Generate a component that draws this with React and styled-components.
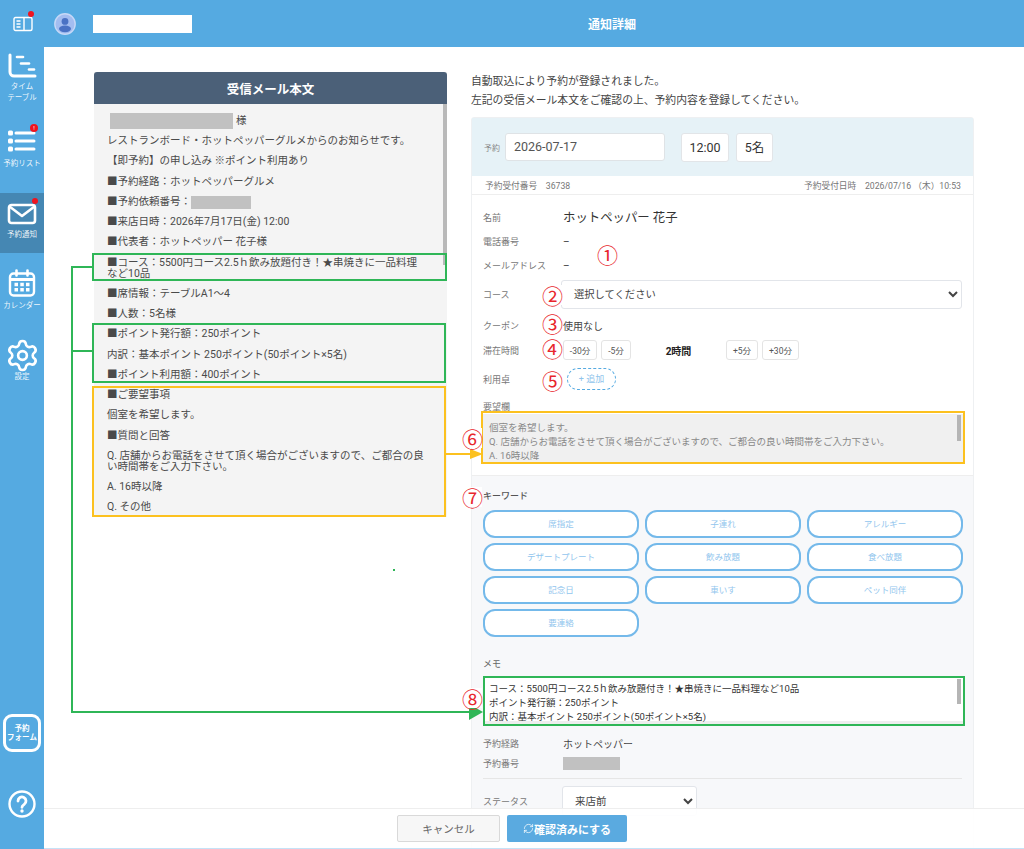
import React from "react";
import styled, { createGlobalStyle } from "styled-components";
import { Settings, RefreshCw } from "lucide-react";

const GlobalStyle = createGlobalStyle`
  html, body { margin: 0; padding: 0; background: #fff; }
  body { font-family: Roboto, "Noto Sans CJK JP", sans-serif; }
  * { box-sizing: border-box; }
`;

const mailLines = [
  "レストランボード・ホットペッパーグルメからのお知らせです。",
  "【即予約】の申し込み ※ポイント利用あり",
  "■予約経路：ホットペッパーグルメ",
];
const mailLines2 = [
  "■来店日時：2026年7月17日(金) 12:00",
  "■代表者：ホットペッパー 花子様",
  "■コース：5500円コース2.5ｈ飲み放題付き！★串焼きに一品料理\nなど10品",
  "■席情報：テーブルA1〜4",
  "■人数：5名様",
  "■ポイント発行額：250ポイント",
  "内訳：基本ポイント 250ポイント(50ポイント×5名)",
  "■ポイント利用額：400ポイント",
  "■ご要望事項",
  "個室を希望します。",
  "■質問と回答",
  "Q. 店舗からお電話をさせて頂く場合がございますので、ご都合の良\nい時間帯をご入力下さい。",
  "A. 16時以降",
  "Q. その他",
];
const keywords = ["席指定", "子連れ", "アレルギー", "デザートプレート", "飲み放題", "食べ放題", "記念日", "車いす", "ペット同伴", "要連絡"];
const markers = [
  ["①", 607, 254],
  ["②", 552, 295],
  ["③", 552, 323],
  ["④", 552, 348],
  ["⑤", 552, 380],
  ["⑥", 472, 438],
  ["⑦", 472, 497],
  ["⑧", 472, 698],
];

const App = () => {
  return (
    <Page>
      <GlobalStyle />
      <TopBar>
        <BookIcon>
          <svg width="20" height="16" viewBox="0 0 20 16" fill="none" stroke="#fff" strokeWidth="1.4">
            <rect x="1" y="1.5" width="18" height="13" rx="1.5" />
            <path d="M11 1.5v13M3.5 5h4M3.5 8h4M3.5 11h4" />
          </svg>
          <RedDot $x={15} $y={-5} />
        </BookIcon>
        <Avatar>
          <svg width="22" height="22" viewBox="0 0 22 22">
            <circle cx="11" cy="11" r="10.2" fill="#a3bdf0" stroke="#c6d8f7" strokeWidth="1.4" />
            <circle cx="11" cy="8.4" r="3.4" fill="#4a72c4" />
            <ellipse cx="11" cy="15.8" rx="6" ry="3.4" fill="#4a72c4" />
          </svg>
        </Avatar>
        <NameBlank />
        <Title>通知詳細</Title>
      </TopBar>

      <Body>
        <Side>
          <SideItem $h={73} $pad={6}>
            <svg width="30" height="25" viewBox="0 0 30 25" fill="none" stroke="#fff" strokeLinecap="round">
              <path d="M3 2v17a4 4 0 0 0 4 4h21" strokeWidth="3" />
              <path d="M10 4h6" strokeWidth="2.6" />
              <path d="M14 10.500h8" strokeWidth="2.6" />
              <path d="M22 16.500h5" strokeWidth="2.6" />
            </svg>
            <SideLabel $mt={2.500}>タイム<br />テーブル</SideLabel>
          </SideItem>
          <SideItem $h={73} $pad={9}>
            <svg width="30" height="24" viewBox="0 0 30 24" fill="none" stroke="#fff">
              <path d="M9 4h18M9 12h18M9 20h18" strokeWidth="3" strokeLinecap="round" />
              <rect x="1" y="1.500" width="5" height="5" rx="1.500" fill="#fff" stroke="none" />
              <rect x="1" y="9.500" width="5" height="5" rx="1.500" fill="#fff" stroke="none" />
              <rect x="1" y="17.500" width="5" height="5" rx="1.500" fill="#fff" stroke="none" />
            </svg>
            <SideLabel $mt={5}>予約リスト</SideLabel>
            <AlertBadge>!</AlertBadge>
          </SideItem>
          <SideItem $h={60} $pad={10} $active>
            <svg width="30" height="22" viewBox="0 0 30 22" fill="none" stroke="#fff" strokeWidth="2.6" strokeLinejoin="round">
              <rect x="2" y="2" width="26" height="18" rx="2.500" />
              <path d="M2.500 3.500 15 13 27.500 3.500" />
            </svg>
            <SideLabel>予約通知</SideLabel>
            <RedDot $x={32} $y={5} />
          </SideItem>
          <SideItem $h={73} $pad={16}>
            <svg width="28" height="28" viewBox="0 0 28 28" fill="none" stroke="#fff">
              <rect x="2" y="4.500" width="24" height="22" rx="3.500" strokeWidth="2.400" />
              <path d="M2 10.500h24" strokeWidth="3" />
              <path d="M8.500 1.500v5M19.500 1.500v5" strokeWidth="2.600" strokeLinecap="round" />
              <path d="M6.500 15.500h3.500M12.300 15.500h3.500M18 15.500h3.500M6.500 20.700h3.500M12.300 20.700h3.500M18 20.700h3.500" strokeWidth="3.400" />
            </svg>
            <SideLabel $mt={3}>カレンダー</SideLabel>
          </SideItem>
          <SideItem $h={60} $pad={12}>
            <Settings size={35} color="#fff" strokeWidth={1.8} />
            <SideLabel $mt={-2.500}>設定</SideLabel>
          </SideItem>
          <FormButton>予約<br />フォーム</FormButton>
          <HelpIcon>
            <svg width="28" height="28" viewBox="0 0 28 28" fill="none" stroke="#fff">
              <circle cx="14" cy="14" r="12.500" strokeWidth="2.400" />
              <path d="M10 11a4 4 0 1 1 6.200 3.300c-1.400.9-2.200 1.500-2.200 3" strokeWidth="2.800" strokeLinecap="round" />
              <circle cx="14" cy="21" r="1.700" fill="#fff" stroke="none" />
            </svg>
          </HelpIcon>
        </Side>

        <Main>
          <MailPanel>
            <MailHead>受信メール本文</MailHead>
            <MailBody>
              <MailLine><Redact $w={123} $h={16} $gap={3} />様</MailLine>
              {mailLines.map((t) => <MailLine key={t}>{t}</MailLine>)}
              <MailLine>■予約依頼番号：<Redact $w={60} $h={13} /></MailLine>
              {mailLines2.map((t) => <MailLine key={t}>{t}</MailLine>)}
              <MailThumb />
            </MailBody>
          </MailPanel>

          <Detail>
            <Intro>
              自動取込により予約が登録されました。<br />
              左記の受信メール本文をご確認の上、予約内容を登録してください。
            </Intro>
            <Card>
              <BookingHead>
                <TinyLabel>予約</TinyLabel>
                <DateBox>2026-07-17</DateBox>
                <ValueBox $w={48} $ml={16}>12:00</ValueBox>
                <ValueBox $w={37} $ml={7}>5名</ValueBox>
              </BookingHead>
              <MetaRow>
                <span>予約受付番号　36738</span>
                <span>予約受付日時　2026/07/16 （木）10:53</span>
              </MetaRow>
              <FormSection>
                <Row $h={24}><Label>名前</Label><GuestName>ホットペッパー 花子</GuestName></Row>
                <Row $h={24}><Label>電話番号</Label><Value>–</Value></Row>
                <Row $h={24}><Label>メールアドレス</Label><Value>–</Value></Row>
                <Row $h={29} $mt={3}>
                  <Label $w={78}>コース</Label>
                  <CourseSelect defaultValue="none">
                    <option value="none">選択してください</option>
                  </CourseSelect>
                </Row>
                <Row $h={30} $mt={1}><Label>クーポン</Label><Value>使用なし</Value></Row>
                <Row $h={20}>
                  <Label>滞在時間</Label>
                  <StepButton $w={34}>-30分</StepButton>
                  <StepButton $w={30} $ml={4}>-5分</StepButton>
                  <StayTime>2時間</StayTime>
                  <StepButton $w={32}>+5分</StepButton>
                  <StepButton $w={37} $ml={4}>+30分</StepButton>
                </Row>
                <Row $h={22} $mt={8}><Label $w={84}>利用卓</Label><AddTable>+ 追加</AddTable></Row>
                <RequestLabel>要望欄</RequestLabel>
                <NoteBox $gray $h={48}>
                  個室を希望します。<br />
                  Q. 店舗からお電話をさせて頂く場合がございますので、ご都合の良い時間帯をご入力下さい。<br />
                  A. 16時以降
                  <NoteThumb $h={26} />
                </NoteBox>
              </FormSection>
              <KeywordSection>
                <KeywordLabel>キーワード</KeywordLabel>
                <KeywordGrid>
                  {keywords.map((k) => <Keyword key={k}>{k}</Keyword>)}
                </KeywordGrid>
                <MemoLabel>メモ</MemoLabel>
                <NoteBox $h={46}>
                  コース：5500円コース2.5ｈ飲み放題付き！★串焼きに一品料理など10品<br />
                  ポイント発行額：250ポイント<br />
                  内訳：基本ポイント 250ポイント(50ポイント×5名)
                  <NoteThumb $h={25} />
                </NoteBox>
                <Row $h={20} $mt={9}><Label>予約経路</Label><Value>ホットペッパー</Value></Row>
                <Row $h={20}><Label>予約番号</Label><Redact $w={57} $h={13} /></Row>
                <Divider />
                <Row $h={30} $mt={7}>
                  <Label $w={79}>ステータス</Label>
                  <StatusSelect defaultValue="before">
                    <option value="before">来店前</option>
                  </StatusSelect>
                </Row>
              </KeywordSection>
            </Card>
          </Detail>
        </Main>
      </Body>

      <Footer>
        <CancelButton>キャンセル</CancelButton>
        <ConfirmButton><RefreshCw size={11} strokeWidth={1.6} />確認済みにする</ConfirmButton>
      </Footer>

      {/* 説明用の注釈 */}
      <Callout $x={92} $y={253} $w={355} $h={28} />
      <Callout $x={92} $y={323} $w={354} $h={60} />
      <Callout $x={92} $y={386} $w={354} $h={131} $yellow />
      <Callout $x={481} $y={411} $w={484} $h={53} $yellow />
      <Callout $x={483} $y={676} $w={482} $h={50} />
      <Arrows width="1024" height="849" viewBox="0 0 1024 849" fill="none">
        <path d="M92 267H72V712H470M72 351H92" stroke="#2fb657" strokeWidth="2" />
        <path d="M469 704 483 712 469 720Z" fill="#2fb657" />
        <path d="M446 454H471" stroke="#fcc11f" strokeWidth="2" />
        <path d="M470 449 483 454 470 459Z" fill="#fcc11f" />
        <rect x="393" y="569" width="2" height="2" fill="#2fb657" />
      </Arrows>
      {markers.map(([n, x, y]) => <Marker key={n} $x={x} $y={y}>{n}</Marker>)}
    </Page>
  );
};

export default App;

const Page = styled.div`
  position: relative;
  width: 1024px;
  height: 849px;
  overflow: hidden;
  color: #444;
  font-family: Roboto, "Noto Sans CJK JP", sans-serif;
`;
const TopBar = styled.header`
  display: flex;
  align-items: center;
  height: 47px;
  background: #55aae1;
  position: relative;
`;
const BookIcon = styled.div`
  position: relative;
  display: flex;
  width: 20px;
  margin-left: 13px;
`;
const Avatar = styled.div`
  display: flex;
  margin-left: 21px;
`;
const NameBlank = styled.div`
  width: 99px;
  height: 18px;
  margin-left: 17px;
  background: #fff;
`;
const Title = styled.div`
  flex: 1;
  padding-left: 8px;
  text-align: center;
  color: #fff;
  font-size: 12px;
  font-weight: 700;
`;
const RedDot = styled.span`
  position: absolute;
  left: ${(p) => p.$x}px;
  top: ${(p) => p.$y}px;
  width: 6px;
  height: 6px;
  border-radius: 50%;
  background: #f0141e;
`;
const Body = styled.div`
  display: flex;
  height: 802px;
`;
const Side = styled.nav`
  display: flex;
  flex-direction: column;
  flex: 0 0 44px;
  background: #55aae1;
`;
const SideItem = styled.div`
  position: relative;
  display: flex;
  flex-direction: column;
  align-items: center;
  height: ${(p) => p.$h}px;
  padding-top: ${(p) => p.$pad}px;
  background: ${(p) => (p.$active ? "#4587b3" : "transparent")};
`;
const SideLabel = styled.div`
  margin-top: ${(p) => p.$mt ?? 4}px;
  color: rgba(255, 255, 255, 0.9);
  font-size: 7.500px;
  line-height: 11px;
  text-align: center;
  white-space: nowrap;
`;
const AlertBadge = styled.span`
  position: absolute;
  left: 30px;
  top: 4px;
  width: 8px;
  height: 8px;
  border-radius: 50%;
  background: #f0141e;
  color: #fff;
  font-size: 6px;
  line-height: 8px;
  text-align: center;
`;
const FormButton = styled.div`
  display: flex;
  align-items: center;
  justify-content: center;
  width: 38px;
  height: 38px;
  margin: 328px 0 0 3px;
  border: 3px solid #fff;
  border-radius: 9px;
  color: #fff;
  font-size: 7.500px;
  font-weight: 700;
  line-height: 9px;
  text-align: center;
  white-space: nowrap;
`;
const HelpIcon = styled.div`
  display: flex;
  margin: 38px 0 0 8px;
`;
const Main = styled.main`
  flex: 1;
  display: flex;
  align-items: flex-start;
  padding: 25px 0 0 50px;
  background: #fff;
`;
const MailPanel = styled.section`
  flex: 0 0 353px;
  height: 445px;
  background: #f4f4f4;
`;
const MailHead = styled.h2`
  margin: 0;
  height: 32px;
  border-radius: 3px 3px 0 0;
  background: #4b6078;
  color: #fff;
  font-size: 12.500px;
  font-weight: 700;
  line-height: 35px;
  text-align: center;
`;
const MailBody = styled.div`
  position: relative;
  height: 413px;
  padding: 10.800px 10px 0 13px;
  overflow: hidden;
`;
const MailLine = styled.p`
  margin: 0 0 9.250px;
  min-height: 11px;
  color: #4a4a4a;
  font-size: 10.500px;
  line-height: 11px;
  white-space: pre-line;
`;
const MailThumb = styled.div`
  position: absolute;
  right: 0;
  top: 0;
  width: 4px;
  height: 161px;
  background: #b9b9b9;
`;
const Redact = styled.span`
  display: inline-block;
  vertical-align: middle;
  width: ${(p) => p.$w}px;
  height: ${(p) => p.$h}px;
  margin: -4px ${(p) => p.$gap ?? 0}px;
  background: #c1c1c1;
`;
const Detail = styled.section`
  flex: 0 0 503px;
  margin-left: 24px;
`;
const Intro = styled.p`
  margin: 0;
  height: 45px;
  color: #444;
  font-size: 10.800px;
  line-height: 19px;
`;
const Card = styled.div`
  border: 1px solid #eef0f2;
  border-radius: 3px 3px 0 0;
  background: #fff;
`;
const BookingHead = styled.div`
  display: flex;
  align-items: center;
  height: 58px;
  padding-left: 12px;
  background: #e6f2f7;
`;
const TinyLabel = styled.span`
  width: 21px;
  color: #888;
  font-size: 8px;
`;
const DateBox = styled.div`
  width: 160px;
  height: 28px;
  padding-left: 8px;
  border: 1px solid #dfe3e6;
  border-radius: 3px;
  background: #fff;
  color: #555;
  font-size: 12.500px;
  line-height: 26px;
`;
const ValueBox = styled.div`
  width: ${(p) => p.$w}px;
  height: 29px;
  margin-left: ${(p) => p.$ml}px;
  border: 1px solid #e2e5e8;
  border-radius: 3px;
  background: #fff;
  color: #333;
  font-size: 12.500px;
  line-height: 27px;
  text-align: center;
`;
const MetaRow = styled.div`
  display: flex;
  justify-content: space-between;
  align-items: center;
  height: 19px;
  padding: 0 12px 0 13px;
  border-bottom: 1px solid #eeeeee;
  color: #777;
  font-size: 8.700px;
`;
const FormSection = styled.div`
  height: 281px;
  padding: 10px 10px 0 11px;
  border-bottom: 1px solid #eeeeee;
`;
const Row = styled.div`
  display: flex;
  align-items: center;
  height: ${(p) => p.$h}px;
  margin-top: ${(p) => p.$mt ?? 0}px;
`;
const Label = styled.span`
  flex: 0 0 ${(p) => p.$w ?? 80}px;
  color: #777;
  font-size: 9px;
  white-space: nowrap;
`;
const Value = styled.span`
  color: #444;
  font-size: 10px;
`;
const GuestName = styled.span`
  color: #333;
  font-size: 12.400px;
`;
const CourseSelect = styled.select`
  width: 401px;
  height: 29px;
  padding-left: 8px;
  border: 1px solid #e2e5ea;
  border-radius: 3px;
  background: #fff;
  color: #444;
  font-family: inherit;
  font-size: 10.300px;
`;
const StepButton = styled.button`
  width: ${(p) => p.$w}px;
  height: 20px;
  margin-left: ${(p) => p.$ml ?? 0}px;
  padding: 0;
  border: 1px solid #e4e4e4;
  border-radius: 3px;
  background: #fff;
  color: #555;
  font-family: inherit;
  font-size: 8.500px;
`;
const StayTime = styled.span`
  width: 95px;
  color: #222;
  font-size: 10px;
  font-weight: 700;
  text-align: center;
`;
const AddTable = styled.div`
  width: 49px;
  height: 22px;
  border: 1px dashed #55aae1;
  border-radius: 11px;
  color: #8fc4ec;
  font-size: 9px;
  line-height: 20px;
  text-align: center;
`;
const RequestLabel = styled.div`
  height: 14px;
  margin-top: 10px;
  color: #777;
  font-size: 9px;
  line-height: 14px;
`;
const NoteBox = styled.div`
  position: relative;
  width: 480px;
  height: ${(p) => p.$h}px;
  padding: ${(p) => (p.$gray ? 7 : 4)}px 8px 0 6px;
  overflow: hidden;
  background: ${(p) => (p.$gray ? "#f0f0f0" : "#fff")};
  box-shadow: ${(p) => (p.$gray ? "none" : "inset 0 -3px 0 #eeeeee")};
  color: ${(p) => (p.$gray ? "#888" : "#333")};
  font-size: 9.500px;
  line-height: 13.800px;
  white-space: nowrap;
`;
const NoteThumb = styled.div`
  position: absolute;
  right: 2px;
  top: 1px;
  width: 4px;
  height: ${(p) => p.$h}px;
  background: #b5b5b5;
`;
const KeywordSection = styled.div`
  height: 380px;
  padding: 14px 10px 0 11px;
  background: #f7f8fa;
`;
const KeywordLabel = styled.div`
  height: 12px;
  color: #555;
  font-size: 9px;
  font-weight: 500;
  line-height: 12px;
`;
const KeywordGrid = styled.div`
  display: grid;
  grid-template-columns: repeat(3, 156px);
  grid-auto-rows: 28px;
  gap: 5px 6px;
  margin-top: 8px;
`;
const Keyword = styled.div`
  border: 2px solid #74b9ea;
  border-radius: 12px;
  background: #fff;
  color: #92c6ee;
  font-size: 8.500px;
  line-height: 24px;
  text-align: center;
`;
const MemoLabel = styled.div`
  height: 12px;
  margin: 21px 0 8px;
  color: #666;
  font-size: 9px;
  line-height: 12px;
`;
const Divider = styled.div`
  width: 479px;
  height: 1px;
  margin-top: 5px;
  background: #e6e6e6;
`;
const StatusSelect = styled.select`
  width: 135px;
  height: 30px;
  padding-left: 8px;
  border: 1px solid #e2e5ea;
  border-radius: 3px;
  background: #fff;
  color: #444;
  font-family: inherit;
  font-size: 10.500px;
`;
const Footer = styled.footer`
  position: absolute;
  left: 44px;
  right: 0;
  bottom: 0;
  display: flex;
  align-items: center;
  justify-content: center;
  gap: 7px;
  height: 41px;
  padding: 0 44px 0 0;
  border-top: 1px solid #eeeeee;
  border-bottom: 1px solid #c5e2f7;
  background: rgba(255, 255, 255, 0.93);
`;
const CancelButton = styled.button`
  width: 103px;
  height: 27px;
  padding: 0;
  border: 1px solid #d9d9d9;
  border-radius: 2px;
  background: #f7f7f7;
  color: #666;
  font-family: inherit;
  font-size: 10.500px;
`;
const ConfirmButton = styled.button`
  display: flex;
  align-items: center;
  justify-content: center;
  width: 120px;
  height: 27px;
  padding: 0;
  border: 0;
  border-radius: 2px;
  background: #5aaae0;
  color: #fff;
  font-family: inherit;
  font-size: 11px;
  font-weight: 700;
`;
const Callout = styled.div`
  position: absolute;
  left: ${(p) => p.$x}px;
  top: ${(p) => p.$y}px;
  width: ${(p) => p.$w}px;
  height: ${(p) => p.$h}px;
  border: 2px solid ${(p) => (p.$yellow ? "#fcc11f" : "#2fb657")};
  pointer-events: none;
`;
const Arrows = styled.svg`
  position: absolute;
  left: 0;
  top: 0;
  pointer-events: none;
`;
const Marker = styled.span`
  position: absolute;
  left: ${(p) => p.$x - 10}px;
  top: ${(p) => p.$y - 10}px;
  width: 20px;
  height: 20px;
  background: #fff;
  color: #e8262c;
  font-family: "Noto Sans CJK JP", sans-serif;
  font-size: 21px;
  line-height: 20px;
  text-align: center;
`;
